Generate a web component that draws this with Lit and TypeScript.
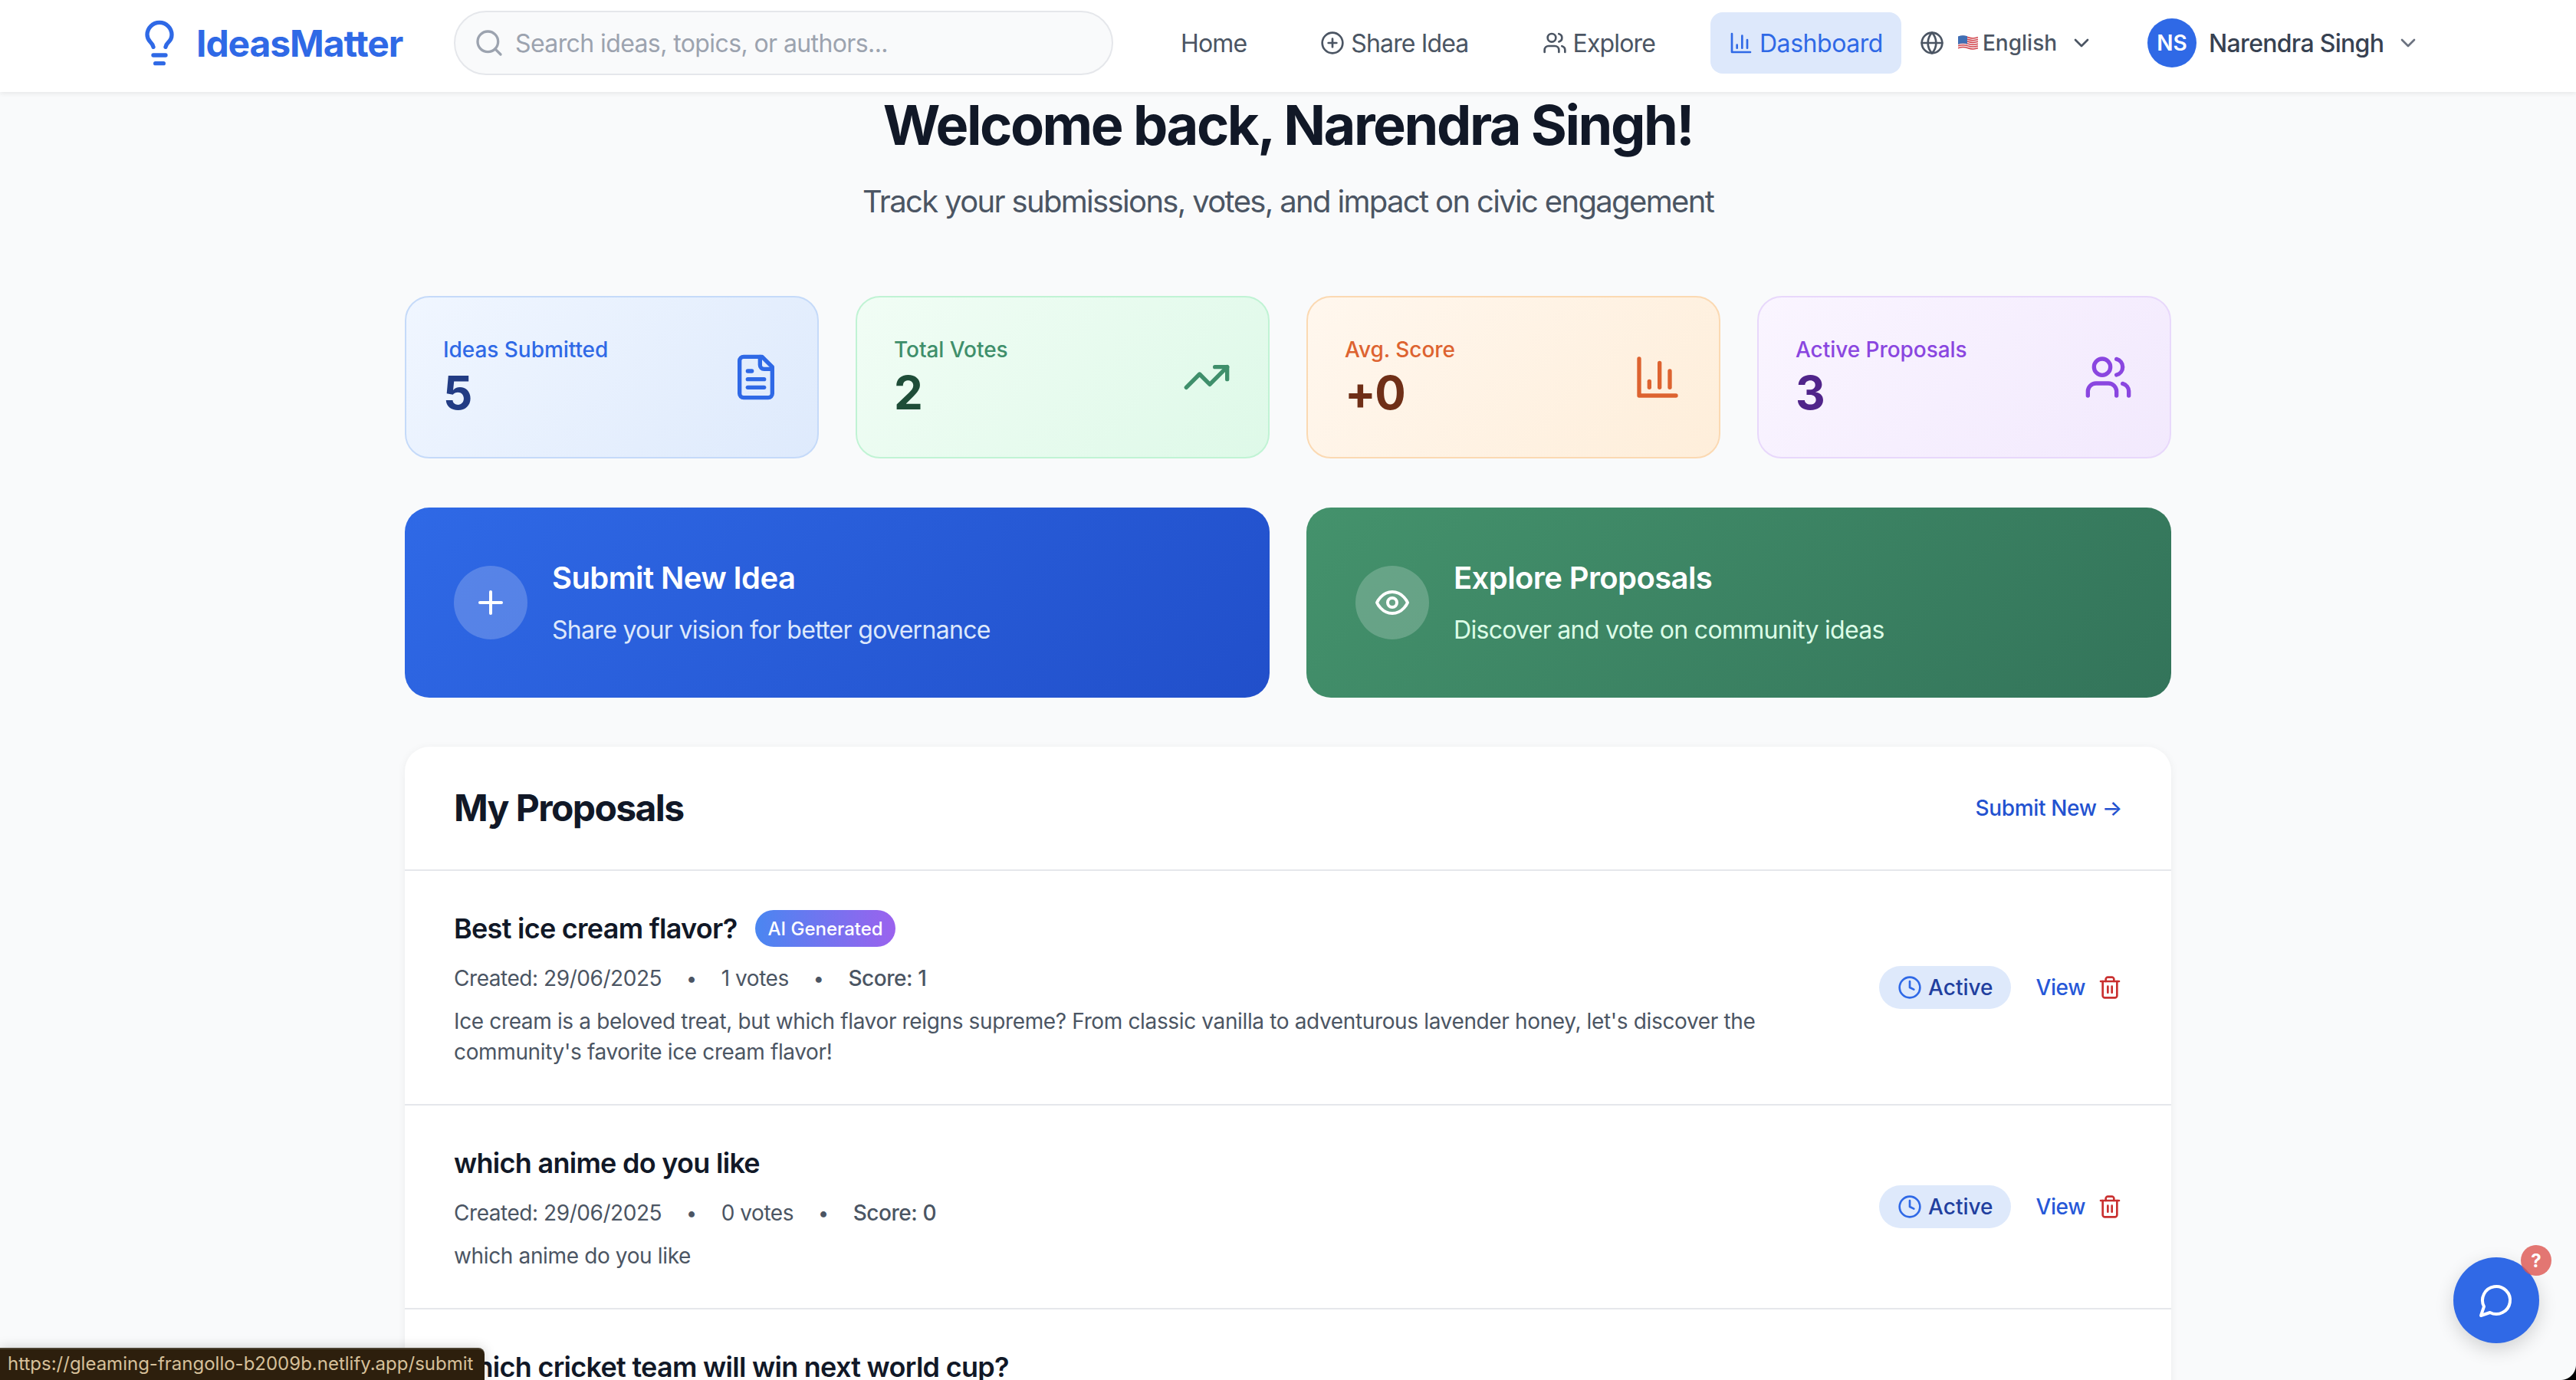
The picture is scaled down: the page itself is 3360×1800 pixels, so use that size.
import { LitElement, html, css, svg } from "lit";
import { customElement } from "lit/decorators.js";

const paths: Record<string, unknown> = {
  bulb: svg`<path d="M15 14c.2-1 .7-1.7 1.5-2.5 1-.9 1.5-2.2 1.5-3.5A6 6 0 0 0 6 8c0 1 .2 2.2 1.5 3.5.7.7 1.3 1.5 1.5 2.5"/><path d="M9 18h6"/><path d="M10 22h4"/>`,
  search: svg`<circle cx="11" cy="11" r="8"/><path d="m21 21-4.3-4.3"/>`,
  circlePlus: svg`<circle cx="12" cy="12" r="10"/><path d="M8 12h8"/><path d="M12 8v8"/>`,
  users: svg`<path d="M16 21v-2a4 4 0 0 0-4-4H6a4 4 0 0 0-4 4v2"/><circle cx="9" cy="7" r="4"/><path d="M22 21v-2a4 4 0 0 0-3-3.87"/><path d="M16 3.13a4 4 0 0 1 0 7.75"/>`,
  chart: svg`<path d="M3 3v18h18"/><path d="M18 17V9"/><path d="M13 17V5"/><path d="M8 17v-3"/>`,
  globe: svg`<circle cx="12" cy="12" r="10"/><path d="M12 2a14.5 14.5 0 0 0 0 20 14.5 14.5 0 0 0 0-20"/><path d="M2 12h20"/>`,
  chevron: svg`<path d="m6 9 6 6 6-6"/>`,
  file: svg`<path d="M15 2H6a2 2 0 0 0-2 2v16a2 2 0 0 0 2 2h12a2 2 0 0 0 2-2V7Z"/><path d="M14 2v4a2 2 0 0 0 2 2h4"/><path d="M10 9H8"/><path d="M16 13H8"/><path d="M16 17H8"/>`,
  trend: svg`<polyline points="22 7 13.5 15.5 8.5 10.5 2 17"/><polyline points="16 7 22 7 22 13"/>`,
  plus: svg`<path d="M5 12h14"/><path d="M12 5v14"/>`,
  eye: svg`<path d="M2 12s3-7 10-7 10 7 10 7-3 7-10 7-10-7-10-7Z"/><circle cx="12" cy="12" r="3"/>`,
  clock: svg`<circle cx="12" cy="12" r="10"/><polyline points="12 6 12 12 16 14"/>`,
  trash: svg`<path d="M3 6h18"/><path d="M19 6v14c0 1-1 2-2 2H7c-1 0-2-1-2-2V6"/><path d="M8 6V4c0-1 1-2 2-2h4c1 0 2 1 2 2v2"/><line x1="10" y1="11" x2="10" y2="17"/><line x1="14" y1="11" x2="14" y2="17"/>`,
  chat: svg`<path d="M7.9 20A9 9 0 1 0 4 16.1L2 22Z"/>`,
};

const icon = (name: string, cls: string) =>
  html`<svg class="ic ${cls}" viewBox="0 0 24 24" fill="none" stroke="currentColor" stroke-width="2" stroke-linecap="round" stroke-linejoin="round">${paths[name]}</svg>`;

const flag = html`<svg class="flag" viewBox="0 0 26 20">
  <path d="M0 1.5q6.5-2.4 13 0t13 0v16q-6.500 2.400-13 0t-13 0Z" fill="#f3f1f1"/>
  <path d="M0 2.700q6.500-2.400 13 0t13 0M0 5.500q6.500-2.400 13 0t13 0M0 8.300q6.500-2.400 13 0t13 0M0 11.100q6.500-2.400 13 0t13 0M0 13.900q6.500-2.400 13 0t13 0M0 16.700q6.500-2.400 13 0t13 0" stroke="#d6474f" stroke-width="1.500" fill="none"/>
  <path d="M0 1.500q6-2.200 12-.3v10.300q-6-1.900-12 .3Z" fill="#3f6fb5"/>
</svg>`;

const stats = [
  { cls: "blue", label: "Ideas Submitted", value: "5", ic: "file" },
  { cls: "green", label: "Total Votes", value: "2", ic: "trend" },
  { cls: "orange", label: "Avg. Score", value: "+0", ic: "chart" },
  { cls: "purple", label: "Active Proposals", value: "3", ic: "users" },
];

const proposals = [
  {
    title: "Best ice cream flavor?",
    ai: true,
    votes: "1 votes",
    score: "Score: 1",
    desc: "Ice cream is a beloved treat, but which flavor reigns supreme? From classic vanilla to adventurous lavender honey, let's discover the community's favorite ice cream flavor!",
  },
  {
    title: "which anime do you like",
    ai: false,
    votes: "0 votes",
    score: "Score: 0",
    desc: "which anime do you like",
  },
];

@customElement("app-root")
export class AppRoot extends LitElement {
  static styles = css`
    :host {
      display: block;
      position: relative;
      height: 1800px;
      overflow: hidden;
      background: #f9fafb;
      font-family: Inter, "Liberation Sans", sans-serif;
      color: #111827;
    }
    * { box-sizing: border-box; }
    .ic { display: block; flex: none; }
    .s32 { width: 32px; height: 32px; }
    .s40 { width: 40px; height: 40px; }
    .s48 { width: 48px; height: 48px; }
    .s64 { width: 64px; height: 64px; }

    header {
      height: 120px;
      padding-bottom: 8px;
      background: #fff;
      box-shadow: 0 2px 6px rgba(0, 0, 0, 0.08);
      display: flex;
      align-items: center;
      padding-left: 176px;
      position: relative;
    }
    .logo { display: flex; align-items: center; gap: 16px; color: #2f69e6; width: 416px; }
    .logo span { font-size: 48px; font-weight: 700; letter-spacing: -1.1px; }
    .search {
      width: 860px;
      height: 84px;
      border: 2px solid #e5e7eb;
      border-radius: 42px;
      background: #f9fafb;
      display: flex;
      align-items: center;
      gap: 14px;
      padding-left: 24px;
      color: #9ca3af;
      font-size: 32px;
      letter-spacing: -0.6px;
    }
    nav { display: flex; align-items: center; gap: 48px; margin-left: 64px; }
    .link {
      display: flex;
      align-items: center;
      gap: 8px;
      height: 80px;
      padding: 0 24px;
      border-radius: 16px;
      color: #4b5563;
      font-size: 32px;
      font-weight: 400;
      letter-spacing: -0.85px;
    }
    .link.active { background: #dde8fb; color: #2f69e6; letter-spacing: -0.45px; }
    .lang {
      display: flex;
      align-items: center;
      padding: 0 24px;
      color: #4b5563;
      font-size: 28px;
      font-weight: 500;
    }
    .flag { width: 26px; height: 20px; margin: 0 6px 0 18px; flex: none; }
    .lang .chev { margin-left: 16px; }
    .user { display: flex; align-items: center; margin-left: 46px; color: #374151; font-size: 32px; font-weight: 500; letter-spacing: -0.7px; }
    .avatar {
      width: 64px;
      height: 64px;
      border-radius: 50%;
      background: #2f69e6;
      color: #fff;
      font-size: 28px;
      font-weight: 600;
      letter-spacing: 0;
      display: flex;
      align-items: center;
      justify-content: center;
      margin-right: 16px;
    }
    .user .chev { margin-left: 16px; color: #6b7280; }

    main { width: 2304px; margin: 0 auto; padding-top: 3px; }
    h1 { margin: 0; text-align: center; font-size: 72px; line-height: 80px; font-weight: 700; letter-spacing: -2.44px; color: #111827; }
    .sub { margin: 32px 0 95px; text-align: center; font-size: 40px; line-height: 56px; letter-spacing: -1.66px; color: #4b5563; }

    .stats { display: grid; grid-template-columns: repeat(4, 1fr); gap: 48px; }
    .stat {
      height: 212px;
      padding: 48px;
      border-radius: 32px;
      border: 2px solid;
      display: flex;
      align-items: center;
      justify-content: space-between;
    }
    .stat .label { font-size: 28px; line-height: 40px; font-weight: 500; letter-spacing: -0.05px; }
    .stat .value { font-size: 60px; line-height: 72px; font-weight: 700; letter-spacing: -1.5px; }
    .stat.blue { background: linear-gradient(135deg, #f0f6ff, #deeafc); border-color: #c5daf9; }
    .blue .label, .blue .ic { color: #2f69e6; }
    .blue .value { color: #223c84; }
    .stat.green { background: linear-gradient(135deg, #f1fdf5, #def9e8); border-color: #c0f3d4; }
    .green .label, .green .ic { color: #3f8f6b; }
    .green .value { color: #1e4d38; }
    .stat.orange { background: linear-gradient(135deg, #fff7ee, #feeeda); border-color: #fbd9b2; }
    .orange .label, .orange .ic { color: #dd6330; }
    .orange .value { color: #6f2f17; }
    .stat.purple { background: linear-gradient(135deg, #faf5ff, #f2e9fd); border-color: #e8d8fb; }
    .purple .label, .purple .ic { color: #8a46e0; }
    .purple .value { color: #50248a; }

    .actions { display: grid; grid-template-columns: 1fr 1fr; gap: 48px; margin-top: 64px; }
    .action {
      height: 248px;
      padding: 64px;
      border-radius: 32px;
      display: flex;
      align-items: center;
      gap: 32px;
      color: #fff;
    }
    .action.a-blue { background: linear-gradient(135deg, #2f69e6, #214fca); }
    .action.a-green { background: linear-gradient(135deg, #44926c, #33745a); }
    .circle {
      width: 96px;
      height: 96px;
      border-radius: 50%;
      background: rgba(255, 255, 255, 0.2);
      display: flex;
      align-items: center;
      justify-content: center;
      flex: none;
    }
    .a-title { font-size: 40px; line-height: 56px; font-weight: 600; letter-spacing: -0.6px; }
    .a-desc { margin-top: 16px; font-size: 32px; line-height: 48px; letter-spacing: -0.7px; }
    .a-blue .a-desc { color: #dde8fb; }
    .a-green .a-desc { color: #dcfce7; }

    .panel {
      margin-top: 64px;
      background: #fff;
      border-radius: 32px 32px 0 0;
      box-shadow: 0 2px 12px rgba(0, 0, 0, 0.06);
    }
    .p-head {
      height: 162px;
      padding: 0 64px;
      border-bottom: 2px solid #e5e7eb;
      display: flex;
      align-items: center;
      justify-content: space-between;
    }
    .p-head h2 { margin: 0; font-size: 48px; line-height: 64px; font-weight: 700; letter-spacing: -1.6px; color: #111827; }
    .p-head a { font-size: 28px; font-weight: 500; letter-spacing: -0.35px; color: #2352d0; }
    .row {
      padding: 48px 64px;
      border-bottom: 2px solid #e5e7eb;
      display: flex;
      align-items: center;
      justify-content: space-between;
    }
    .r-main { width: 1760px; }
    .r-title { display: flex; align-items: center; gap: 24px; height: 56px; padding-bottom: 2px; font-size: 36px; font-weight: 600; letter-spacing: -0.72px; color: #111827; }
    .badge {
      height: 48px;
      padding: 0 16px;
      border-radius: 24px;
      background: linear-gradient(90deg, #4a86f1, #9b62ee);
      color: #fff;
      font-size: 24px;
      font-weight: 500;
      letter-spacing: 0;
      display: flex;
      align-items: center;
    }
    .meta { display: flex; gap: 32px; margin-top: 16px; font-size: 28px; line-height: 40px; letter-spacing: -0.45px; color: #4b5563; }
    .meta .score { font-weight: 500; }
    .meta .dot { font-size: 25px; }
    .desc { margin: 16px 0 0; font-size: 28px; line-height: 40px; letter-spacing: -0.36px; color: #4b5563; }
    .r-side { display: flex; align-items: center; }
    .pill {
      height: 56px;
      padding: 0 24px;
      border-radius: 28px;
      background: #dee9fb;
      color: #213f9f;
      font-size: 28px;
      font-weight: 500;
      display: flex;
      align-items: center;
      gap: 8px;
    }
    .pill .ic { color: #2f69e6; }
    .view { margin-left: 32px; font-size: 28px; font-weight: 500; letter-spacing: -0.4px; color: #2658d8; }
    .trash { margin-left: 16px; color: #c93030; }

    .status {
      position: absolute;
      left: 0;
      bottom: 0;
      width: 632px;
      height: 42px;
      padding: 0 10px;
      background: #2d1f0d;
      border-top: 2px solid #4a4030;
      border-top-right-radius: 8px;
      box-shadow: 0 0 16px rgba(0, 0, 0, 0.18);
      color: #d6c09a;
      font-size: 24px;
      line-height: 38px;
      white-space: nowrap;
    }
    .fab {
      position: absolute;
      right: 48px;
      bottom: 48px;
      width: 112px;
      height: 112px;
      border-radius: 50%;
      background: #3069e6;
      color: #fff;
      display: flex;
      align-items: center;
      justify-content: center;
      box-shadow: 0 8px 24px rgba(0, 0, 0, 0.16);
    }
    .q {
      position: absolute;
      top: -16px;
      right: -16px;
      width: 40px;
      height: 40px;
      border-radius: 50%;
      background: rgba(221, 85, 80, 0.8);
      color: #fff;
      font-size: 24px;
      font-weight: 700;
      display: flex;
      align-items: center;
      justify-content: center;
    }
    .corner {
      position: absolute;
      right: 0;
      bottom: 0;
      width: 20px;
      height: 20px;
      background: radial-gradient(circle at 0 0, transparent 19.5px, #000 20.5px);
    }
  `;

  render() {
    return html`
      <header>
        <div class="logo">${icon("bulb", "s64")}<span>IdeasMatter</span></div>
        <div class="search">${icon("search", "s40")}<span>Search ideas, topics, or authors...</span></div>
        <nav>
          <div class="link">Home</div>
          <div class="link">${icon("circlePlus", "s32")}Share Idea</div>
          <div class="link">${icon("users", "s32")}Explore</div>
          <div class="link active">${icon("chart", "s32")}Dashboard</div>
        </nav>
        <div class="lang">${icon("globe", "s32")}${flag}<span>English</span>${icon("chevron", "s32 chev")}</div>
        <div class="user"><div class="avatar">NS</div><span>Narendra Singh</span>${icon("chevron", "s32 chev")}</div>
      </header>
      <main>
        <h1>Welcome back, Narendra Singh!</h1>
        <p class="sub">Track your submissions, votes, and impact on civic engagement</p>
        <section class="stats">
          ${stats.map(
            (s) => html`<div class="stat ${s.cls}">
              <div><div class="label">${s.label}</div><div class="value">${s.value}</div></div>
              ${icon(s.ic, "s64")}
            </div>`
          )}
        </section>
        <section class="actions">
          <div class="action a-blue">
            <div class="circle">${icon("plus", "s48")}</div>
            <div><div class="a-title">Submit New Idea</div><div class="a-desc">Share your vision for better governance</div></div>
          </div>
          <div class="action a-green">
            <div class="circle">${icon("eye", "s48")}</div>
            <div><div class="a-title">Explore Proposals</div><div class="a-desc">Discover and vote on community ideas</div></div>
          </div>
        </section>
        <section class="panel">
          <div class="p-head"><h2>My Proposals</h2><a>Submit New →</a></div>
          ${proposals.map(
            (p) => html`<div class="row">
              <div class="r-main">
                <div class="r-title"><span>${p.title}</span>${p.ai ? html`<span class="badge">AI Generated</span>` : ""}</div>
                <div class="meta"><span>Created: 29/06/2025</span><span class="dot">•</span><span>${p.votes}</span><span class="dot">•</span><span class="score">${p.score}</span></div>
                <p class="desc">${p.desc}</p>
              </div>
              <div class="r-side">
                <div class="pill">${icon("clock", "s32")}Active</div>
                <span class="view">View</span>
                ${icon("trash", "s32 trash")}
              </div>
            </div>`
          )}
          <div class="row"><div class="r-main"><div class="r-title"><span>which cricket team will win next world cup?</span></div></div></div>
        </section>
      </main>
      <div class="status">https://gleaming-frangollo-b2009b.netlify.app/submit</div>
      <div class="fab">${icon("chat", "s48")}<div class="q">?</div></div>
      <div class="corner"></div>
    `;
  }
}
